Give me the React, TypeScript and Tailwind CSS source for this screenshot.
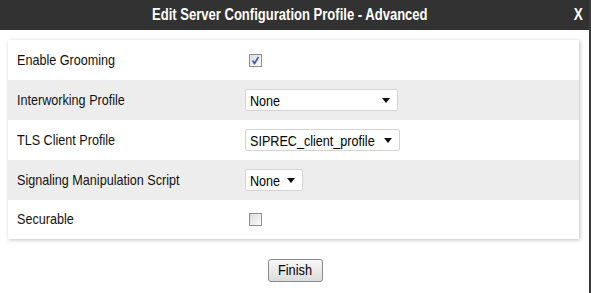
import React from "react";

const rows = [
  { label: "Enable Grooming", kind: "check", checked: true },
  { label: "Interworking Profile", kind: "select", value: "None", width: "w-[153px]" },
  { label: "TLS Client Profile", kind: "select", value: "SIPREC_client_profile", width: "w-[155px]" },
  { label: "Signaling Manipulation Script", kind: "select", value: "None", width: "w-[58px]" },
  { label: "Securable", kind: "check", checked: false },
];

// the original UI uses a narrow face; squeeze Liberation Sans to match
const Narrow = ({ children, className = "" }: { children: React.ReactNode; className?: string }) => (
  <span className={`inline-block origin-left scale-x-[0.84] whitespace-nowrap ${className}`}>{children}</span>
);

const FakeSelect = ({ value, width }: { value: string; width?: string }) => (
  <div
    className={`relative flex h-[22px] items-center overflow-hidden rounded-[2px] border border-[#d4d4d4] bg-white pl-[4px] ${width}`}
  >
    <Narrow className="text-[15px] leading-none text-black">{value}</Narrow>
    <svg className="absolute right-[7px] top-[8px]" width="8" height="5" viewBox="0 0 8 5">
      <path d="M0 0h8L4 5z" fill="#111" />
    </svg>
  </div>
);

const CheckBox = ({ checked }: { checked: boolean }) => (
  <div className="ml-[4px] flex h-[13px] w-[13px] items-center justify-center border border-[#8f8f8f] bg-gradient-to-br from-[#dcdcdc] to-[#fdfdfd]">
    {checked && (
      <svg width="9" height="9" viewBox="0 0 9 9">
        <path d="M1.5 4.5l2 3 4-6.5" stroke="#3b54a8" strokeWidth="1.6" fill="none" />
      </svg>
    )}
  </div>
);

export default function App() {
  return (
    <div
      className="flex h-[293px] w-[591px] bg-white"
      style={{ fontFamily: '"Liberation Sans", Arial, sans-serif' }}
    >
      <div className="flex w-[589px] flex-col">
        {/* title bar */}
        <div className="flex h-[30px] items-center bg-[#323232] text-white">
          <div className="w-[152px] shrink-0" />
          <span className="inline-block origin-left scale-x-[0.815] whitespace-nowrap text-[16px] leading-none font-bold">
            Edit Server Configuration Profile - Advanced
          </span>
          <span className="ml-auto mr-[5px] inline-block scale-x-[0.85] text-[16px] leading-none font-bold">
            X
          </span>
        </div>

        {/* settings card */}
        <div className="ml-[8px] mr-[10px] mt-[10px] flex flex-col bg-white shadow-[1px_1px_4px_rgba(0,0,0,0.25)]">
          {rows.map((r, i) => (
            <div
              key={r.label}
              className={`flex items-center ${i % 2 === 1 ? "bg-[#ededed]" : "bg-white"} ${i === 4 ? "h-[39px]" : "h-[40px]"}`}
            >
              <div className="w-[237px] pl-[9px] text-[15px] text-[#111]">
                <Narrow>{r.label}</Narrow>
              </div>
              {r.kind === "check" ? (
                <CheckBox checked={!!r.checked} />
              ) : (
                <FakeSelect value={r.value!} width={r.width} />
              )}
            </div>
          ))}
        </div>

        <div className="flex justify-center pt-[20px] pl-[1px]">
          <button className="flex h-[23px] w-[55px] items-center justify-center rounded-[3px] border border-[#8a8a8a] bg-gradient-to-b from-[#f8f8f8] to-[#dcdcdc] text-[15px] text-black">
            <span className="inline-block scale-x-[0.85]">Finish</span>
          </button>
        </div>
      </div>
      <div className="w-[2px] bg-[#3a3a3a]" />
    </div>
  );
}
